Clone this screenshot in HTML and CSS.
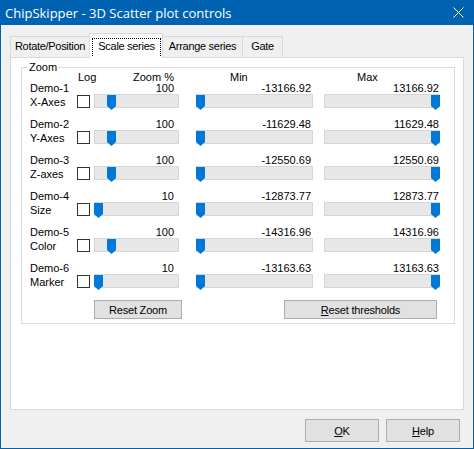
FILE: index.html
```html
<!DOCTYPE html>
<html lang="en">
<head>
    <meta charset="UTF-8">
    <title>ChipSkipper - 3D Scatter plot controls</title>
    <link rel="stylesheet" href="styles.css">
</head>
<body>
    <div class="window">
        <div class="titlebar">
            <span class="title">ChipSkipper - 3D Scatter plot controls</span>
            <svg class="close" width="11" height="11" viewBox="0 0 11 11">
                <path d="M0.5 0.5 L10.5 10.5 M10.5 0.5 L0.5 10.5" stroke="#fff" stroke-width="1" fill="none"/>
            </svg>
        </div>

        <div class="client">
            <div class="tabs">
                <div class="tab tab-rotate">Rotate/Position</div>
                <div class="tab tab-scale active"><span class="focus">Scale series</span></div>
                <div class="tab tab-arrange">Arrange series</div>
                <div class="tab tab-gate">Gate</div>
            </div>

            <div class="panel">
                <div class="group">
                    <span class="legend">Zoom</span>
                    <div class="grid" id="grid">
                        <div class="head head-label"></div>
                        <div class="head head-log">Log</div>
                        <div class="head head-zoom">Zoom %</div>
                        <div class="head head-min">Min</div>
                        <div class="head head-max">Max</div>
                    </div>
                    <div class="group-buttons">
                        <button class="btn btn-zoom">Reset Zoom</button>
                        <button class="btn btn-thresh"><u>R</u>eset thresholds</button>
                    </div>
                </div>
            </div>

            <div class="footer">
                <button class="btn btn-dialog"><u>O</u>K</button>
                <button class="btn btn-dialog"><u>H</u>elp</button>
            </div>
        </div>
    </div>

    <script>
        // Series shown on the scale page
        const series = [
            { name: 'Demo-1', axis: 'X-Axes', zoom: 100, range: '13166.92' },
            { name: 'Demo-2', axis: 'Y-Axes', zoom: 100, range: '11629.48' },
            { name: 'Demo-3', axis: 'Z-axes', zoom: 100, range: '12550.69' },
            { name: 'Demo-4', axis: 'Size', zoom: 10, range: '12873.77' },
            { name: 'Demo-5', axis: 'Color', zoom: 100, range: '14316.96' },
            { name: 'Demo-6', axis: 'Marker', zoom: 10, range: '13163.63' }
        ];

        const thumb = '<svg class="thumb-svg" width="9" height="15" viewBox="0 0 9 15">' +
            '<polygon points="0,0 9,0 9,11 4.5,15 0,11" fill="#0078d7"/></svg>';

        const slider = (cls, left) =>
            `<div class="slider ${cls}"><span class="thumb" style="left:${left}px">${thumb}</span></div>`;

        // Zoom thumb: 10% sits at the left, 100% at 13px
        const zoomLeft = (z) => Math.round((z - 10) / 90 * 13);

        const grid = document.getElementById('grid');
        let html = '';
        series.forEach(s => {
            html += `<div class="name">${s.name}</div>
                <div></div>
                <div class="value value-zoom">${s.zoom}</div>
                <div class="value value-min">-${s.range}</div>
                <div class="value value-max">${s.range}</div>
                <div class="axis">${s.axis}</div>
                <div class="check-cell"><span class="checkbox"></span></div>
                <div>${slider('slider-zoom', zoomLeft(s.zoom))}</div>
                <div>${slider('slider-min', 0)}</div>
                <div>${slider('slider-max', 107)}</div>`;
        });
        grid.insertAdjacentHTML('beforeend', html);
    </script>
</body>
</html>
```

FILE: styles.css
```css
* {
    margin: 0;
    padding: 0;
    box-sizing: border-box;
}

html, body {
    width: 474px;
    height: 449px;
    overflow: hidden;
}

body {
    font-family: "Liberation Sans", Arial, sans-serif;
    font-size: 11px;
    color: #000;
    background: #f0f0f0;
}

.window {
    width: 474px;
    height: 449px;
    border: 1px solid #0063b1;
    border-top: none;
    display: flex;
    flex-direction: column;
    background: #f0f0f0;
}

/* Title bar */
.titlebar {
    height: 25px;
    background: #0063b1;
    display: flex;
    align-items: center;
    justify-content: space-between;
    padding: 0 9px 0 4px;
}

.title {
    font-family: "Open Sans", "Noto Sans", sans-serif;
    font-size: 13px;
    color: #fff;
}

.close {
    display: block;
}

.client {
    flex: 1;
    padding: 8px 9px 6px 9px;
    display: flex;
    flex-direction: column;
}

/* Tabs */
.tabs {
    height: 24px;
    display: flex;
    align-items: flex-end;
}

.tab {
    height: 21px;
    border: 1px solid #d9d9d9;
    border-bottom: none;
    background: #f0f0f0;
    text-align: center;
    line-height: 19px;
    letter-spacing: -0.3px;
    white-space: nowrap;
}

.tab + .tab {
    margin-left: -1px;
}

.tab-rotate { width: 80px; }
.tab-scale { width: 74px; }
.tab-arrange { width: 81px; }
.tab-gate { width: 41px; }

.tab.active {
    height: 25px;
    margin-bottom: -1px;
    background: #fff;
    position: relative;
    z-index: 1;
    padding: 4px 1px 0 2px;
}

.focus {
    display: block;
    height: 18px;
    line-height: 15px;
    border: 1px dotted #000;
    border-bottom: none;
}

/* Tab page */
.panel {
    height: 353px;
    background: #fff;
    border: 1px solid #d9d9d9;
    padding: 9px 8px 0 10px;
}

.group {
    position: relative;
    height: 257px;
    border: 1px solid #dcdcdc;
    padding: 3px 0 0 8px;
}

.legend {
    position: absolute;
    top: -7px;
    left: 6px;
    padding: 0 1px;
    line-height: 13px;
    background: #fff;
}

.grid {
    display: grid;
    grid-template-columns: 47px 17px 102px 128px 116px;
    grid-template-rows: 12px repeat(6, 11px 25px);
    align-items: start;
}

.head {
    line-height: 12px;
    white-space: nowrap;
}

.head-log { padding-left: 1px; }
.head-zoom { width: 85px; text-align: right; padding-right: 5px; }
.head-min { padding-left: 34px; }
.head-max { padding-left: 33px; }

.name {
    line-height: 11px;
    white-space: nowrap;
}

.axis {
    line-height: 16px;
    white-space: nowrap;
}

.value {
    line-height: 11px;
    text-align: right;
}

.value-zoom { width: 85px; padding-right: 5px; }
.value-min { width: 117px; padding-right: 2px; }
.value-max { width: 116px; padding-right: 1px; }

.check-cell {
    padding-top: 1px;
}

.checkbox {
    display: block;
    width: 13px;
    height: 13px;
    border: 1px solid #333;
    background: #fff;
}

/* Track bars */
.slider {
    position: relative;
    height: 14px;
    background: #e7e7e7;
    border: 1px solid #d6d6d6;
}

.slider-zoom { width: 85px; }
.slider-min { width: 117px; }
.slider-max { width: 116px; }

.thumb {
    position: absolute;
    top: 0;
    margin-left: -1px;
    width: 9px;
    height: 15px;
}

.thumb-svg {
    display: block;
}

/* Buttons */
.btn {
    font-family: "Liberation Sans", Arial, sans-serif;
    font-size: 11px;
    color: #000;
    background: #e1e1e1;
    border: 1px solid #adadad;
    letter-spacing: -0.2px;
}

.btn u {
    text-decoration: underline;
}

.group-buttons {
    display: flex;
    margin-top: 1px;
}

.btn-zoom {
    width: 88px;
    height: 19px;
    margin-left: 64px;
}

.btn-thresh {
    width: 153px;
    height: 19px;
    margin-left: 102px;
}

.footer {
    display: flex;
    justify-content: flex-end;
    gap: 7px;
    margin-top: 9px;
    padding-right: 4px;
}

.btn-dialog {
    width: 74px;
    height: 23px;
}
```
